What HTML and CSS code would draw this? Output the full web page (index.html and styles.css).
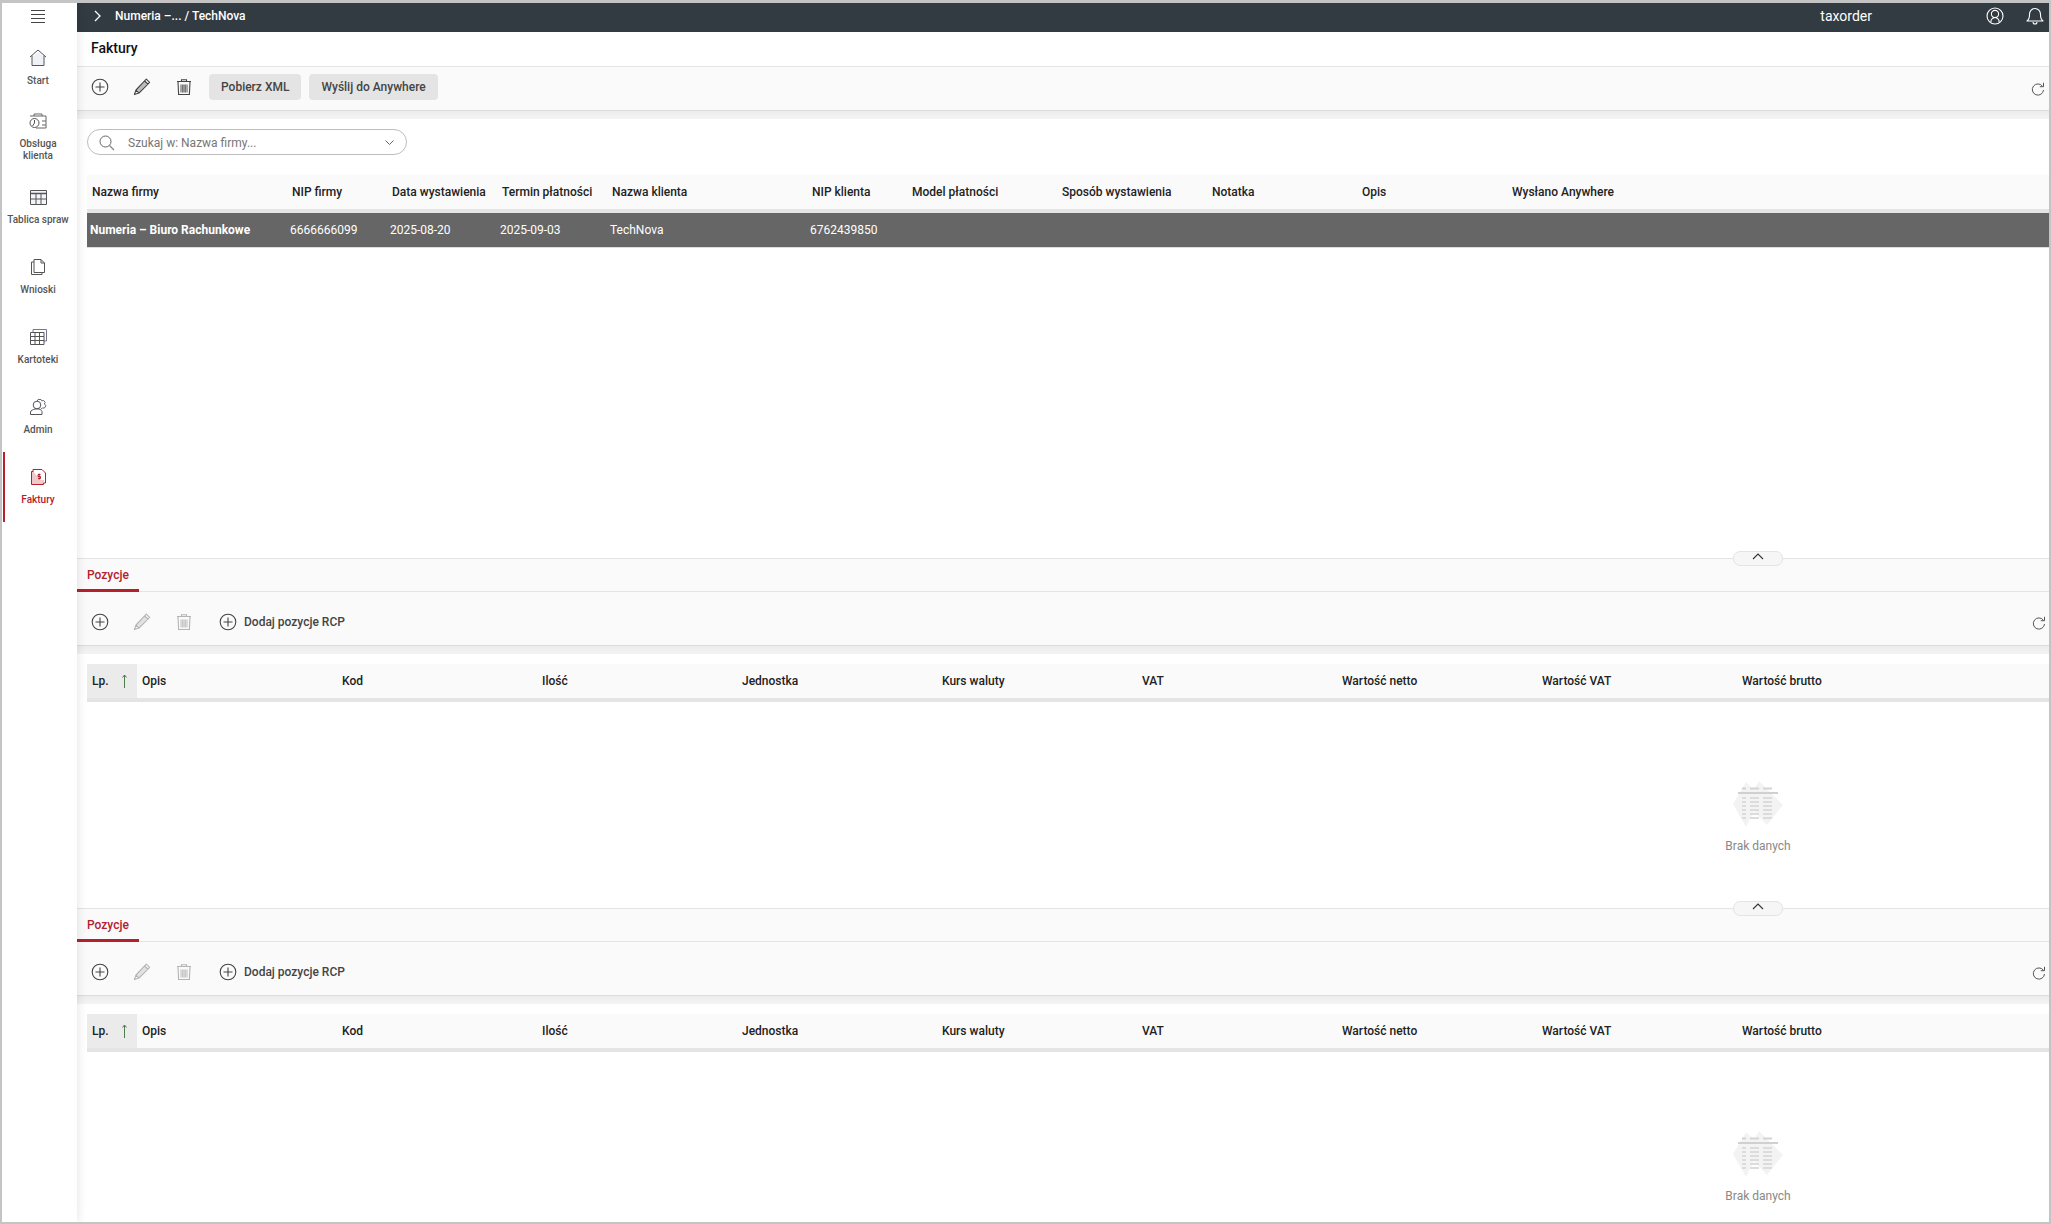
FILE: index.html
```html
<!DOCTYPE html>
<html lang="pl">
<head>
<meta charset="utf-8">
<title>Faktury</title>
<link rel="stylesheet" href="styles.css">
</head>
<body>
<svg class="sprite" aria-hidden="true">
  <symbol id="i-plus" viewBox="0 0 18 18"><circle cx="9" cy="9" r="7.800" fill="none" stroke="currentColor" stroke-width="1.100"/><path d="M9 4.500v9M4.500 9h9" fill="none" stroke="currentColor" stroke-width="1.100"/></symbol>
  <symbol id="i-pencil" viewBox="0 0 18 18"><path d="M13.300 1.200l3.300 3.200L6 15l-4.600 1.600L3 12zM11.600 3l3.300 3.200M3 12l3 3" fill="none" stroke="currentColor" stroke-width="1.100" stroke-linejoin="round"/><path d="M4 11.500l8.500-8.500 2.200 2.200L6.200 13.800z" fill="currentColor" opacity=".35"/></symbol>
  <symbol id="i-trash" viewBox="0 0 18 18"><path d="M2 3.500h14M6.500 3.500V1.700h5v1.800M3 3.500l.6 13h10.800l.6-13z" fill="none" stroke="currentColor" stroke-width="1.100"/><path d="M6 6.500v8M7.700 6.500v8M9 6.500v8M10.300 6.500v8M12 6.500v8" fill="none" stroke="currentColor" stroke-width=".9"/></symbol>
  <symbol id="i-refresh" viewBox="0 0 14 14"><path d="M11.500 4.300A5.600 5.600 0 1 0 12.500 8" fill="none" stroke="currentColor" stroke-width="1"/><path d="M12.500 .8v3.900H8.800" fill="none" stroke="currentColor" stroke-width="1"/></symbol>
  <symbol id="i-up" viewBox="0 0 12 7"><path d="M1 6l5-5 5 5" fill="none" stroke="currentColor" stroke-width="1.100"/></symbol>
  <symbol id="i-empty" viewBox="0 0 52 46">
    <path d="M14 1l15 15-15 30L1 23z" fill="#f3f3f3"/><path d="M27 0l24 24-16 20L14 22z" fill="#f3f3f3"/>
    <path d="M6 12h40" stroke="#d0d0d0" stroke-width="2"/>
    <path d="M10 7.500h4M18 7.500h9M31 7.500h9" stroke="#d4d4d4" stroke-width="2"/>
    <path d="M10 17h4M18 17h9M31 17h9M10 21h4M18 21h9M31 21h9M10 25h4M18 25h9M31 25h9M10 29h4M18 29h9M31 29h9M10 33h4M18 33h9M31 33h9M10 37h4M18 37h9M31 37h9" stroke="#dcdcdc" stroke-width="2"/>
  </symbol>
</svg>

<div class="app">
  <nav class="sidebar">
    <div class="burger">
      <svg width="14" height="13" viewBox="0 0 14 13"><path d="M0 .5h14M0 4.500h14M0 8.500h14M0 12.500h14" stroke="#444" stroke-width="1"/></svg>
    </div>
    <a class="nav-item">
      <svg class="nav-icon" width="18" height="17" viewBox="0 0 18 17"><path d="M3.500 7.500L9 3l5.500 4.500V16h-11z" fill="#eef1f5"/><path d="M1 8L9 1l8 7M3 6.500V16.500h12V6.500" fill="none" stroke="#555" stroke-width="1"/></svg>
      <span>Start</span>
    </a>
    <a class="nav-item">
      <svg class="nav-icon" width="18" height="16" viewBox="0 0 18 16"><path d="M1 3h16v12H7M5 3V1h8v2" fill="none" stroke="#666" stroke-width="1"/><path d="M13 8h4M13 12h4" stroke="#666"/><circle cx="5.500" cy="10" r="4.500" fill="#fff" stroke="#555"/><path d="M5.500 7v3l-2 3" fill="none" stroke="#555"/></svg>
      <span>Obsługa klienta</span>
    </a>
    <a class="nav-item">
      <svg class="nav-icon" width="17" height="15" viewBox="0 0 17 15"><path d="M.5.5h16v14H.5z" fill="#f2f5f9" stroke="#555"/><path d="M.5 3.500h16" stroke="#555" stroke-width="1.500"/><path d="M.5 9h16M6 3.500v11M11 3.500v11" stroke="#555"/></svg>
      <span>Tablica spraw</span>
    </a>
    <a class="nav-item">
      <svg class="nav-icon" width="14" height="16" viewBox="0 0 14 16"><path d="M3 .5h7l3.500 3.500v9.500H3z" fill="#fff" stroke="#555"/><path d="M10 .5V4h3.500M3 3H.5v12.500H11v-2" fill="none" stroke="#555"/></svg>
      <span>Wnioski</span>
    </a>
    <a class="nav-item">
      <svg class="nav-icon" width="17" height="16" viewBox="0 0 17 16"><path d="M3 3V.5h13.500V12H14" fill="none" stroke="#778"/><path d="M.5 3.500h13.500v12H.5z" fill="#fff" stroke="#555"/><path d="M.5 7.500h13.500M.5 11.500h13.500M5 3.500v12M9.500 3.500v12" stroke="#555"/></svg>
      <span>Kartoteki</span>
    </a>
    <a class="nav-item">
      <svg class="nav-icon" width="17" height="16" viewBox="0 0 17 16"><circle cx="7" cy="6" r="3.800" fill="none" stroke="#555"/><path d="M.5 15.500v-2.500c0-1.500 3-2.500 4.500-3h4c1.500.5 2.500 1.200 3 2.500v3z" fill="#fff" stroke="#555"/><path d="M7 2.500l1-2h3l.7 1.300 2-.3 1.500 2-1 1.500 1.800 1.500-1.500 2.500-2 0L11 10" fill="none" stroke="#667"/></svg>
      <span>Admin</span>
    </a>
    <a class="nav-item active">
      <svg class="nav-icon" width="15" height="16" viewBox="0 0 15 16"><path d="M2 .5h9l3.500 3.500v10H2z" fill="#fff" stroke="#b5202d"/><path d="M2 2.500H.5v13h12V14" fill="#eec9cc" stroke="#b5202d"/><path d="M3 11h10v2.500H3z" fill="#eec9cc"/><path d="M9.500 5.500H7v2h2.500v2H7M8.200 4.500v6" fill="none" stroke="#b5202d" stroke-width="1"/></svg>
      <span>Faktury</span>
    </a>
  </nav>

  <div class="main">
    <header class="topbar">
      <svg class="crumb-chevron" width="7" height="12" viewBox="0 0 7 12"><path d="M1 1l5 5-5 5" fill="none" stroke="#fff" stroke-width="1.300"/></svg>
      <span class="crumb">Numeria –... / TechNova</span>
      <span class="brand">taxorder</span>
      <svg class="top-user" width="18" height="18" viewBox="0 0 18 18"><circle cx="9" cy="9" r="8" fill="none" stroke="#fff" stroke-width="1.100"/><circle cx="9" cy="7" r="3.600" fill="none" stroke="#fff" stroke-width="1.100"/><path d="M5 15v-1.500c0-1 1.500-2 2.500-2.500V10M13 15v-1.500c0-1-1.500-2-2.500-2.500V10" fill="none" stroke="#fff" stroke-width="1.100"/></svg>
      <svg class="top-bell" width="18" height="18" viewBox="0 0 18 18"><path d="M1 14c2-1.500 2.500-3 2.500-6.500C3.500 4 6 1.500 9 1.500s5.500 2.500 5.500 6c0 3.500.5 5 2.500 6.500z" fill="none" stroke="#fff" stroke-width="1.100" stroke-linejoin="round"/><path d="M7 15a2 2 0 0 0 4 0" fill="none" stroke="#fff" stroke-width="1.100"/></svg>
    </header>
    <h1 class="page-title">Faktury</h1>

    <section class="top-pane">
      <div class="toolbar toolbar-top">
        <svg class="tool"><use href="#i-plus"/></svg>
        <svg class="tool"><use href="#i-pencil"/></svg>
        <svg class="tool"><use href="#i-trash"/></svg>
        <button class="btn">Pobierz XML</button>
        <button class="btn">Wyślij do Anywhere</button>
        <svg class="refresh"><use href="#i-refresh"/></svg>
      </div>
      <div class="shade"></div>
      <div class="search">
        <svg width="16" height="16" viewBox="0 0 16 16"><circle cx="6.500" cy="6.500" r="5.500" fill="none" stroke="#666"/><path d="M10.500 10.500l4.500 4.500" stroke="#888" stroke-width="1.300"/></svg>
        <span class="search-text">Szukaj w: Nazwa firmy...</span>
        <svg width="9" height="5" viewBox="0 0 9 5"><path d="M.5.500l4 4 4-4" fill="none" stroke="#666"/></svg>
      </div>
      <div class="grid invoices head">
        <div>Nazwa firmy</div><div>NIP firmy</div><div>Data wystawienia</div><div>Termin płatności</div><div>Nazwa klienta</div><div>NIP klienta</div><div>Model płatności</div><div>Sposób wystawienia</div><div>Notatka</div><div>Opis</div><div>Wysłano Anywhere</div>
      </div>
      <div class="grid invoices row-selected">
        <div class="strong">Numeria – Biuro Rachunkowe</div><div>6666666099</div><div>2025-08-20</div><div>2025-09-03</div><div>TechNova</div><div>6762439850</div>
      </div>
    </section>

    <section class="pane">
      <button class="handle"><svg width="12" height="7"><use href="#i-up"/></svg></button>
      <div class="tabs"><span class="tab">Pozycje</span></div>
      <div class="toolbar toolbar-sub">
        <svg class="tool"><use href="#i-plus"/></svg>
        <svg class="tool disabled"><use href="#i-pencil"/></svg>
        <svg class="tool disabled"><use href="#i-trash"/></svg>
        <span class="add-rcp"><svg class="tool-plain"><use href="#i-plus"/></svg>Dodaj pozycje RCP</span>
        <svg class="refresh refresh-sub"><use href="#i-refresh"/></svg>
      </div>
      <div class="shade"></div>
      <div class="grid items head">
        <div class="lp">Lp.<svg width="5" height="14" viewBox="0 0 5 14"><path d="M2.500 14V1M.5 3.500l2-2.500 2 2.500" fill="none" stroke="#4c7d4c" stroke-width="1"/></svg></div><div>Opis</div><div>Kod</div><div>Ilość</div><div>Jednostka</div><div>Kurs waluty</div><div>VAT</div><div>Wartość netto</div><div>Wartość VAT</div><div>Wartość brutto</div>
      </div>
      <div class="empty">
        <svg width="52" height="46"><use href="#i-empty"/></svg>
        <span>Brak danych</span>
      </div>
    </section>

    <section class="pane">
      <button class="handle"><svg width="12" height="7"><use href="#i-up"/></svg></button>
      <div class="tabs"><span class="tab">Pozycje</span></div>
      <div class="toolbar toolbar-sub">
        <svg class="tool"><use href="#i-plus"/></svg>
        <svg class="tool disabled"><use href="#i-pencil"/></svg>
        <svg class="tool disabled"><use href="#i-trash"/></svg>
        <span class="add-rcp"><svg class="tool-plain"><use href="#i-plus"/></svg>Dodaj pozycje RCP</span>
        <svg class="refresh refresh-sub"><use href="#i-refresh"/></svg>
      </div>
      <div class="shade"></div>
      <div class="grid items head">
        <div class="lp">Lp.<svg width="5" height="14" viewBox="0 0 5 14"><path d="M2.500 14V1M.5 3.500l2-2.500 2 2.500" fill="none" stroke="#4c7d4c" stroke-width="1"/></svg></div><div>Opis</div><div>Kod</div><div>Ilość</div><div>Jednostka</div><div>Kurs waluty</div><div>VAT</div><div>Wartość netto</div><div>Wartość VAT</div><div>Wartość brutto</div>
      </div>
      <div class="empty">
        <svg width="52" height="46"><use href="#i-empty"/></svg>
        <span>Brak danych</span>
      </div>
    </section>
  </div>
</div>
</body>
</html>
```

FILE: styles.css
```css
* { box-sizing: border-box; }
html, body { margin: 0; height: 100%; }
body {
  background: #c4c4c4;
  font-family: Roboto, "Liberation Sans", sans-serif;
  font-size: 12px;
  color: #222;
  overflow: hidden;
}
.sprite { display: none; }
.app {
  display: flex;
  width: 2047px;
  height: 1219px;
  margin: 3px 2px 2px;
  background: #fff;
  overflow: hidden;
}
.sidebar {
  width: 75px;
  flex: none;
  background: #fff;
  display: flex;
  flex-direction: column;
  position: relative;
  z-index: 2;
  box-shadow: 0 0 10px rgba(0, 0, 0, .12);
}
.burger {
  height: 29px;
  display: flex;
  align-items: center;
  justify-content: center;
  padding: 0 3px 3px 0;
}
.nav-item {
  height: 70px;
  margin-left: 1px;
  padding: 1px 6px 0 0;
  border-left: 2px solid transparent;
  display: flex;
  flex-direction: column;
  align-items: center;
  justify-content: center;
  gap: 9px;
  color: #555;
  font-size: 10px;
  font-weight: 500;
  line-height: 12px;
  text-align: center;
}
.nav-item span { max-width: 56px; }
.nav-item:nth-child(4) span { max-width: none; white-space: nowrap; }
.nav-item.active { border-left-color: #b5202d; color: #b5202d; }

.main { flex: 1; min-width: 0; display: flex; flex-direction: column; }
.topbar {
  height: 29px;
  flex: none;
  background: #323a42;
  color: #fff;
  display: flex;
  align-items: center;
  padding: 0 5px 3px 17px;
}
.crumb { margin-left: 14px; font-weight: 500; font-size: 12px; }
.brand { margin-left: auto; font-size: 14px; }
.top-user { margin-left: 114px; }
.top-bell { margin-left: 22px; }
.page-title {
  margin: 0;
  height: 35px;
  flex: none;
  padding: 0 0 0 14px;
  font-size: 14px;
  font-weight: 500;
  color: #111;
  line-height: 33px;
  border-bottom: 1px solid #e4e4e4;
}

.top-pane { height: 491px; flex: none; display: flex; flex-direction: column; }
.toolbar {
  display: flex;
  align-items: center;
  background: #fafafa;
  flex: none;
  padding-left: 14px;
  border-bottom: 1px solid #dcdcdc;
}
.toolbar-top { height: 44px; padding-bottom: 4px; }
.toolbar-sub { height: 54px; padding-top: 6px; }
.tool { width: 18px; height: 18px; margin-right: 24px; color: #444; flex: none; }
.tool.disabled { color: #b4b4b4; }
.tool-plain { width: 18px; height: 18px; color: #444; margin-right: 7px; flex: none; }
.toolbar-top .tool:nth-of-type(3) { margin-right: 16px; }
.btn {
  height: 26px;
  padding: 0 12px;
  margin-right: 8px;
  border: 0;
  border-radius: 4px;
  background: #e4e4e4;
  color: #444;
  font: 500 12px Roboto, sans-serif;
}
.add-rcp { display: flex; align-items: center; font-weight: 500; color: #444; margin-left: 2px; }
.refresh { width: 14px; height: 14px; margin-left: auto; margin-right: 4px; margin-top: 5px; color: #555; flex: none; }
.refresh-sub { margin-right: 3px; margin-top: 2px; }
.shade { height: 8px; flex: none; background: linear-gradient(#ececec, #f4f4f4); }

.search {
  width: 320px;
  height: 26px;
  margin: 10px 0 20px 10px;
  flex: none;
  border: 1px solid #bdbdbd;
  border-radius: 13px;
  display: flex;
  align-items: center;
  padding: 1px 12px 0 11px;
}
.search-text { margin: 0 auto 0 13px; color: #777; }

.grid { display: grid; margin-left: 10px; flex: none; }
.invoices { grid-template-columns: 200px 100px 110px 110px 200px 100px 150px 150px 150px 150px 1fr; }
.items { grid-template-columns: 50px repeat(9, 200px) 1fr; }
.head {
  height: 38px;
  background: #fafafa;
  border-bottom: 4px solid #e4e4e4;
  color: #222;
  font-weight: 500;
  line-height: 34px;
}
.head > div { padding-left: 5px; white-space: nowrap; }
.row-selected {
  height: 35px;
  background: #666;
  color: #fff;
  line-height: 34px;
  border-bottom: 1px solid #ddd;
}
.row-selected > div { padding-left: 3px; white-space: nowrap; }
.strong { font-weight: 700; }

.pane {
  position: relative;
  height: 350px;
  flex: none;
  border-top: 1px solid #e4e4e4;
  display: flex;
  flex-direction: column;
}
.tabs {
  height: 33px;
  flex: none;
  background: #fafafa;
  border-bottom: 1px solid #e4e4e4;
}
.tab {
  display: block;
  width: 62px;
  height: 33px;
  border-bottom: 3px solid #b5202d;
  padding-left: 10px;
  color: #b5202d;
  font-weight: 500;
  line-height: 32px;
}
.handle {
  position: absolute;
  top: -8px;
  right: 266px;
  width: 50px;
  height: 15px;
  border: 1px solid #e4e4e4;
  border-radius: 7px;
  background: #f6f6f6;
  color: #333;
  padding: 1px 0 0;
  display: flex;
  align-items: flex-start;
  justify-content: center;
}
.pane .items { margin-top: 10px; }
.lp {
  background: #ebebeb;
  display: flex;
  align-items: center;
  justify-content: space-between;
  padding-right: 10px;
  height: 34px;
}
.empty {
  align-self: flex-end;
  width: 582px;
  margin-top: 79px;
  display: flex;
  flex-direction: column;
  align-items: center;
  gap: 12px;
  color: #888;
  font-size: 12px;
}
```
